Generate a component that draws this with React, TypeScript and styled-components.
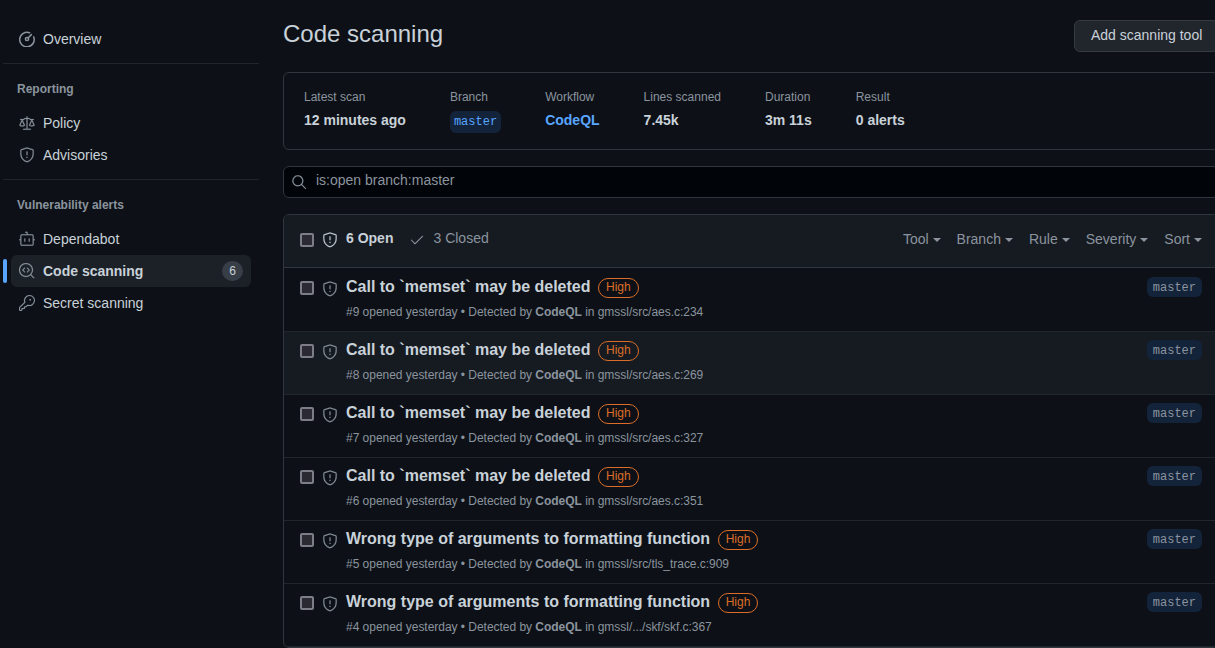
import styled, { createGlobalStyle } from 'styled-components';
import { GoCheck, GoCodescan, GoDependabot, GoKey, GoLaw, GoSearch, GoShield } from 'react-icons/go';

const alerts = [
  { id: 9, title: 'Call to `memset` may be deleted', path: 'gmssl/src/aes.c:234' },
  { id: 8, title: 'Call to `memset` may be deleted', path: 'gmssl/src/aes.c:269', hover: true },
  { id: 7, title: 'Call to `memset` may be deleted', path: 'gmssl/src/aes.c:327' },
  { id: 6, title: 'Call to `memset` may be deleted', path: 'gmssl/src/aes.c:351' },
  { id: 5, title: 'Wrong type of arguments to formatting function', path: 'gmssl/src/tls_trace.c:909' },
  { id: 4, title: 'Wrong type of arguments to formatting function', path: 'gmssl/.../skf/skf.c:367' },
];

const stats = [
  { label: 'Latest scan', value: '12 minutes ago' },
  { label: 'Lines scanned', value: '7.45k' },
  { label: 'Duration', value: '3m 11s' },
  { label: 'Result', value: '0 alerts' },
];

const filters = ['Tool', 'Branch', 'Rule', 'Severity', 'Sort'];

function MeterIcon() {
  return (
    <svg width="16" height="16" viewBox="0 0 16 16" fill="none" stroke="currentColor" strokeWidth="1.5" strokeLinecap="round">
      <path d="M10.6 1.8A7.25 7.25 0 1 0 14.7 5.9" />
      <circle cx="8" cy="8" r="1.6" />
      <path d="M9.2 6.8 12.4 3.6" />
    </svg>
  );
}

function App() {
  return (
    <Page>
      <GlobalStyle />
      <Sidebar>
        <NavItem><MeterIcon />Overview</NavItem>
        <Divider />
        <NavHeading>Reporting</NavHeading>
        <NavItem><GoLaw size={16} />Policy</NavItem>
        <NavItem><GoShield size={16} />Advisories</NavItem>
        <Divider />
        <NavHeading>Vulnerability alerts</NavHeading>
        <NavItem><GoDependabot size={16} />Dependabot</NavItem>
        <NavItem $active>
          <GoCodescan size={16} />
          Code scanning
          <Counter>6</Counter>
        </NavItem>
        <NavItem><GoKey size={16} />Secret scanning</NavItem>
      </Sidebar>

      <Main>
        <TitleRow>
          <Title>Code scanning</Title>
          <Button>Add scanning tool</Button>
        </TitleRow>

        <ScanBox>
          <Stat>
            <StatLabel>{stats[0].label}</StatLabel>
            <StatValue>{stats[0].value}</StatValue>
          </Stat>
          <Stat>
            <StatLabel>Branch</StatLabel>
            <BranchTag>master</BranchTag>
          </Stat>
          <Stat>
            <StatLabel>Workflow</StatLabel>
            <WorkflowLink>CodeQL</WorkflowLink>
          </Stat>
          {stats.slice(1).map((stat) => (
            <Stat key={stat.label}>
              <StatLabel>{stat.label}</StatLabel>
              <StatValue>{stat.value}</StatValue>
            </Stat>
          ))}
        </ScanBox>

        <SearchBar>
          <GoSearch size={16} />
          <SearchText>is:open branch:master</SearchText>
        </SearchBar>

        <AlertList>
          <ListHeader>
            <Checkbox type="checkbox" />
            <ShieldIcon $bright><GoShield size={16} /></ShieldIcon>
            <OpenCount>6 Open</OpenCount>
            <ClosedCount><GoCheck size={16} />3 Closed</ClosedCount>
            <Filters>
              {filters.map((name) => (
                <Filter key={name}>{name}<Caret /></Filter>
              ))}
            </Filters>
          </ListHeader>
          {alerts.map((alert) => (
            <AlertRow key={alert.id} $hover={alert.hover}>
              <RowCheckbox type="checkbox" />
              <RowShield><GoShield size={16} /></RowShield>
              <AlertBody>
                <AlertTitleLine>
                  <AlertTitle>{alert.title}</AlertTitle>
                  <Severity>High</Severity>
                </AlertTitleLine>
                <AlertMeta>
                  #{alert.id} opened yesterday • Detected by <strong>CodeQL</strong> in {alert.path}
                </AlertMeta>
              </AlertBody>
              <RowTag>master</RowTag>
            </AlertRow>
          ))}
        </AlertList>
      </Main>
    </Page>
  );
}

export default App;

const GlobalStyle = createGlobalStyle`
  html, body {
    margin: 0;
    background: #0d1117;
  }
  * {
    box-sizing: border-box;
  }
`;

const Page = styled.div`
  width: 1215px;
  height: 648px;
  overflow: hidden;
  display: flex;
  background: #0d1117;
  color: #c9d1d9;
  font-family: 'Liberation Sans', Arial, sans-serif;
  font-size: 14px;
`;

const Sidebar = styled.nav`
  flex: none;
  width: 256px;
  margin-left: 3px;
  padding-top: 23px;
`;

const NavItem = styled.div<{ $active?: boolean }>`
  position: relative;
  height: 32px;
  margin: 0 8px;
  padding: 0 8px;
  display: flex;
  align-items: center;
  gap: 8px;
  border-radius: 6px;
  font-weight: ${(p) => (p.$active ? 700 : 400)};
  background: ${(p) => (p.$active ? '#1c2128' : 'transparent')};

  svg {
    flex: none;
    color: #8b949e;
    stroke-width: 0.25;
  }

  svg:has(circle) {
    stroke-width: 1.5;
  }

  ${(p) =>
    p.$active &&
    `&::before {
      content: '';
      position: absolute;
      left: -8px;
      top: 4px;
      width: 4px;
      height: 24px;
      border-radius: 6px;
      background: #58a6ff;
    }`}
`;

const Divider = styled.div`
  height: 1px;
  margin-top: 8px;
  background: #21262d;
`;

const NavHeading = styled.div`
  height: 43px;
  padding: 16px 0 0 14px;
  font-size: 12px;
  line-height: 18px;
  font-weight: 700;
  color: #8b949e;
`;

const Counter = styled.span`
  margin-left: auto;
  width: 21px;
  height: 20px;
  border-radius: 10px;
  background: #373e47;
  font-size: 12px;
  font-weight: 400;
  line-height: 20px;
  text-align: center;
`;

const Main = styled.main`
  flex: none;
  width: 936px;
  margin-left: 24px;
  padding-top: 20px;
`;

const TitleRow = styled.div`
  height: 32px;
  margin-bottom: 20px;
  display: flex;
  justify-content: space-between;
  align-items: center;
`;

const Title = styled.h1`
  margin: -4px 0 0;
  font-size: 24px;
  line-height: 28px;
  font-weight: 400;
`;

const Button = styled.button`
  width: 145px;
  height: 32px;
  padding: 0 16px 2px;
  border: 1px solid #363b42;
  border-radius: 6px;
  background: #21262d;
  color: #c9d1d9;
  font: inherit;
  text-align: left;
  white-space: nowrap;
`;

const ScanBox = styled.section`
  height: 78px;
  margin-bottom: 16px;
  padding: 16px 20px;
  display: flex;
  gap: 44px;
  border: 1px solid #30363d;
  border-radius: 6px;
`;

const Stat = styled.div`
  display: flex;
  flex-direction: column;
  align-items: flex-start;
`;

const StatLabel = styled.div`
  font-size: 12px;
  line-height: 16px;
  color: #8b949e;
`;

const StatValue = styled.div`
  margin-top: 7px;
  line-height: 16px;
  font-weight: 700;
`;

const WorkflowLink = styled(StatValue)`
  color: #58a6ff;
`;

const BranchTag = styled.span`
  margin-top: 6px;
  height: 22px;
  padding: 0 4px;
  border-radius: 6px;
  background: #13233a;
  color: #58a6ff;
  font-family: 'Liberation Mono', monospace;
  font-size: 12px;
  line-height: 22px;
`;

const SearchBar = styled.div`
  height: 32px;
  margin-bottom: 16px;
  padding: 0 8px 0 7px;
  display: flex;
  align-items: center;
  gap: 9px;
  border: 1px solid #30363d;
  border-radius: 6px;
  background: #010409;
  color: #8b949e;

  svg {
    flex: none;
    margin-top: -1px;
    stroke-width: 0.25;
  }
`;

const SearchText = styled.span`
  margin-top: -4px;
`;

const AlertList = styled.section`
  border: 1px solid #30363d;
  border-radius: 6px;
  overflow: hidden;
`;

const ListHeader = styled.div`
  height: 53px;
  margin-bottom: 1px;
  padding: 0 16px 2px;
  display: flex;
  align-items: center;
  background: #161b22;
  border-bottom: 1px solid #30363d;
`;

const Checkbox = styled.input`
  flex: none;
  appearance: none;
  width: 14px;
  height: 14px;
  margin: 0;
  border: 2px solid #7d7d88;
  border-radius: 2px;
  background: #2b2a33;
`;

const RowCheckbox = styled(Checkbox)`
  margin-top: 12px;
`;

const ShieldIcon = styled.span<{ $bright?: boolean }>`
  flex: none;
  width: 16px;
  height: 16px;
  margin: 0 8px;
  color: ${(p) => (p.$bright ? '#c9d1d9' : '#8b949e')};

  svg {
    stroke-width: 0.25;
  }
`;

const RowShield = styled(ShieldIcon)`
  margin-top: 12px;
`;

const OpenCount = styled.span`
  margin-top: -4px;
  font-weight: 700;
`;

const ClosedCount = styled.span`
  margin: -4px 0 0 16px;
  display: flex;
  align-items: center;
  gap: 8px;
  color: #8b949e;

  svg {
    margin-top: 4px;
  }
`;

const Filters = styled.div`
  margin-left: auto;
  margin-top: -2px;
  display: flex;
  gap: 16px;
`;

const Filter = styled.span`
  display: flex;
  align-items: center;
  color: #8b949e;
`;

const Caret = styled.i`
  width: 0;
  height: 0;
  margin-left: 4px;
  margin-top: 2px;
  border: 4px solid transparent;
  border-top-color: #8b949e;
  border-bottom: 0;
`;

const AlertRow = styled.div<{ $hover?: boolean }>`
  height: 63px;
  padding: 0 16px;
  display: flex;
  align-items: flex-start;
  background: ${(p) => (p.$hover ? '#161b22' : 'transparent')};
  border-bottom: 1px solid #21262d;
`;

const AlertBody = styled.div`
  flex: 1;
  padding-top: 7px;
`;

const AlertTitleLine = styled.div`
  height: 22px;
  display: flex;
  align-items: center;
  gap: 7.5px;
`;

const AlertTitle = styled.span`
  font-size: 16px;
  font-weight: 700;
`;

const Severity = styled.span`
  height: 20px;
  margin-top: 2px;
  padding: 0 7px;
  border: 1px solid #db6d28;
  border-radius: 10px;
  color: #db6d28;
  font-size: 12px;
  line-height: 16px;
  font-weight: 400;
`;

const AlertMeta = styled.div`
  margin-top: 6px;
  font-size: 12px;
  line-height: 16px;
  letter-spacing: -0.03px;
  color: #8b949e;

  strong {
    font-weight: 700;
  }
`;

const RowTag = styled.span`
  flex: none;
  margin-top: 8px;
  height: 20px;
  padding: 0 6px;
  border-radius: 6px;
  background: #13233a;
  color: #8b949e;
  font-family: 'Liberation Mono', monospace;
  font-size: 12px;
  line-height: 22px;
`;
